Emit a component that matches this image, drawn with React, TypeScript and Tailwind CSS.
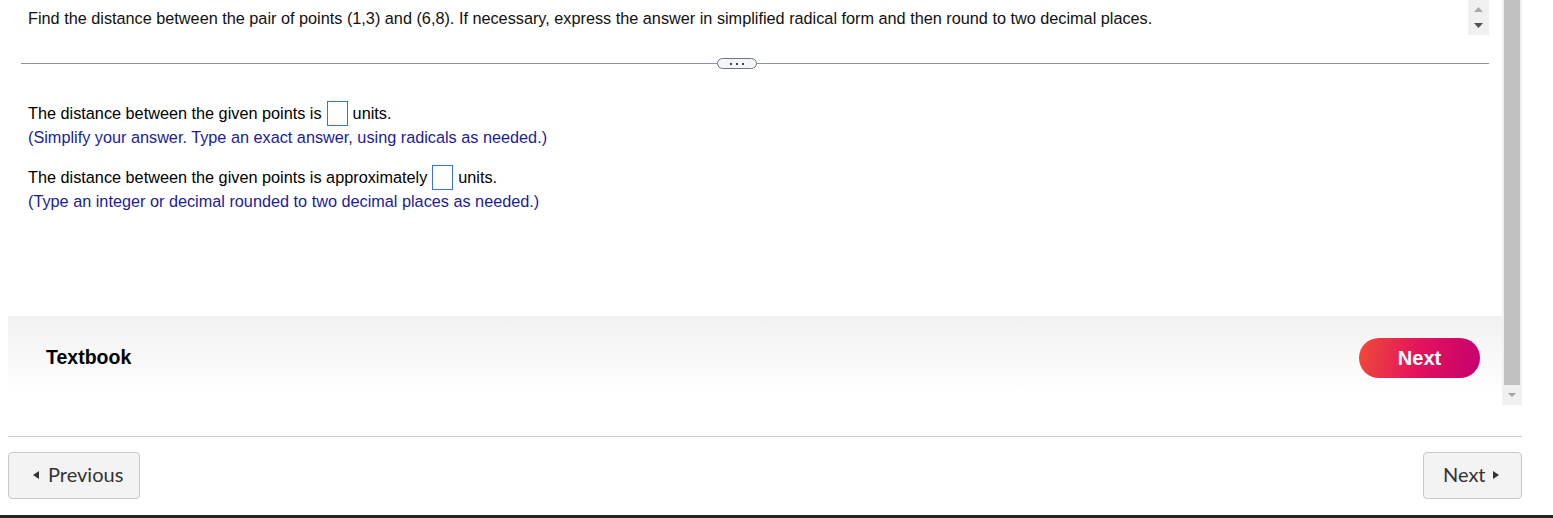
function Triangle({ dir, className }: { dir: 'up' | 'down' | 'left' | 'right'; className: string }) {
  const points = {
    up: '0,8 5,0 10,8',
    down: '0,0 10,0 5,8',
    left: '8,0 8,10 0,5',
    right: '0,0 8,5 0,10',
  };
  return (
    <svg viewBox={dir === 'up' || dir === 'down' ? '0 0 10 8' : '0 0 8 10'} preserveAspectRatio="none" className={className}>
      <polygon points={points[dir]} fill="currentColor" />
    </svg>
  );
}

function AnswerBox() {
  return <span className="mx-[5px] inline-block h-[25px] w-[21px] border border-[#3a74d8] bg-white" />;
}

export default function App() {
  return (
    <div className="flex h-[518px] w-[1553px] flex-col overflow-hidden bg-white font-['Liberation_Sans',Arial,sans-serif] text-black">
      <div className="flex h-[405px]">
        <div className="flex w-[1502px] flex-col">
          <div className="flex h-[45px] pl-[28px] pr-[13px]">
            <p className="flex-1 pt-[9px] text-[16.25px] leading-[18px] text-[#111]">
              Find the distance between the pair of points (1,3) and (6,8). If necessary, express the answer in
              simplified radical form and then round to two decimal places.
            </p>
            <div className="flex h-[35px] w-[21px] flex-col items-center justify-center gap-[11px] bg-[#f0f0f0]">
              <Triangle dir="up" className="h-[5px] w-[9px] text-[#a9a9a9]" />
              <Triangle dir="down" className="h-[5px] w-[9px] text-[#505050]" />
            </div>
          </div>

          <div className="mt-[13px] flex h-[11px] items-center pl-[21px] pr-[13px]">
            <div className="h-px w-[696px] bg-[#8a929c]" />
            <div className="flex h-[11px] w-[40px] items-center justify-center gap-[4px] rounded-full border border-[#6e7680] bg-[#f4f5f7]">
              <span className="h-[2px] w-[2px] bg-[#3c4450]" />
              <span className="h-[2px] w-[2px] bg-[#3c4450]" />
              <span className="h-[2px] w-[2px] bg-[#3c4450]" />
            </div>
            <div className="h-px flex-1 bg-[#8a929c]" />
          </div>

          <div className="mt-[31px] pl-[28px] text-[16.25px]">
            <div className="flex h-[26px] items-center">
              <span>The distance between the given points is</span>
              <AnswerBox />
              <span>units.</span>
            </div>
            <p className="leading-[22px] text-[#1c1c96]">
              (Simplify your answer. Type an exact answer, using radicals as needed.)
            </p>
            <div className="mt-[16px] flex h-[26px] items-center">
              <span>The distance between the given points is approximately</span>
              <AnswerBox />
              <span>units.</span>
            </div>
            <p className="leading-[22px] text-[#1c1c96]">
              (Type an integer or decimal rounded to two decimal places as needed.)
            </p>
          </div>

          <div className="mb-[10px] ml-[8px] mt-auto flex h-[79px] items-center justify-between bg-linear-to-b from-[#f1f1f1] to-white pl-[38px] pr-[22px] pt-[5px]">
            <span className="text-[19.5px] font-bold">Textbook</span>
            <button className="h-[40px] w-[121px] rounded-full bg-[linear-gradient(100deg,#ef4b39_0%,#e2125c_50%,#c6006f_100%)] text-[20px] font-bold text-white">
              Next
            </button>
          </div>
        </div>

        <div className="flex w-[20px] flex-col bg-[#f0f0f0]">
          <div className="mx-[2px] h-[385px] bg-[#c1c1c1]" />
          <div className="flex flex-1 items-center justify-center">
            <Triangle dir="down" className="h-[4px] w-[8px] text-[#a3a3a3]" />
          </div>
        </div>
      </div>

      <div className="ml-[8px] mt-[31px] h-px w-[1514px] bg-[#cccccc]" />

      <div className="ml-[8px] mt-[15px] flex w-[1514px] justify-between font-['Lato',sans-serif] text-[20px] text-[#333]">
        <button className="flex h-[47px] w-[132px] items-center gap-[9px] rounded-[4px] border border-[#c8c8c8] bg-[#f3f3f3] pb-[4px] pl-[24px]">
          <Triangle dir="left" className="mt-[3px] h-[8px] w-[6px] text-[#333]" />
          <span>Previous</span>
        </button>
        <button className="flex h-[47px] w-[99px] items-center gap-[7px] rounded-[4px] border border-[#c8c8c8] bg-[#f3f3f3] pb-[4px] pl-[19px]">
          <span>Next</span>
          <Triangle dir="right" className="mt-[3px] h-[8px] w-[6px] text-[#333]" />
        </button>
      </div>

      <div className="mt-auto h-[3px] bg-[#222]" />
    </div>
  );
}
